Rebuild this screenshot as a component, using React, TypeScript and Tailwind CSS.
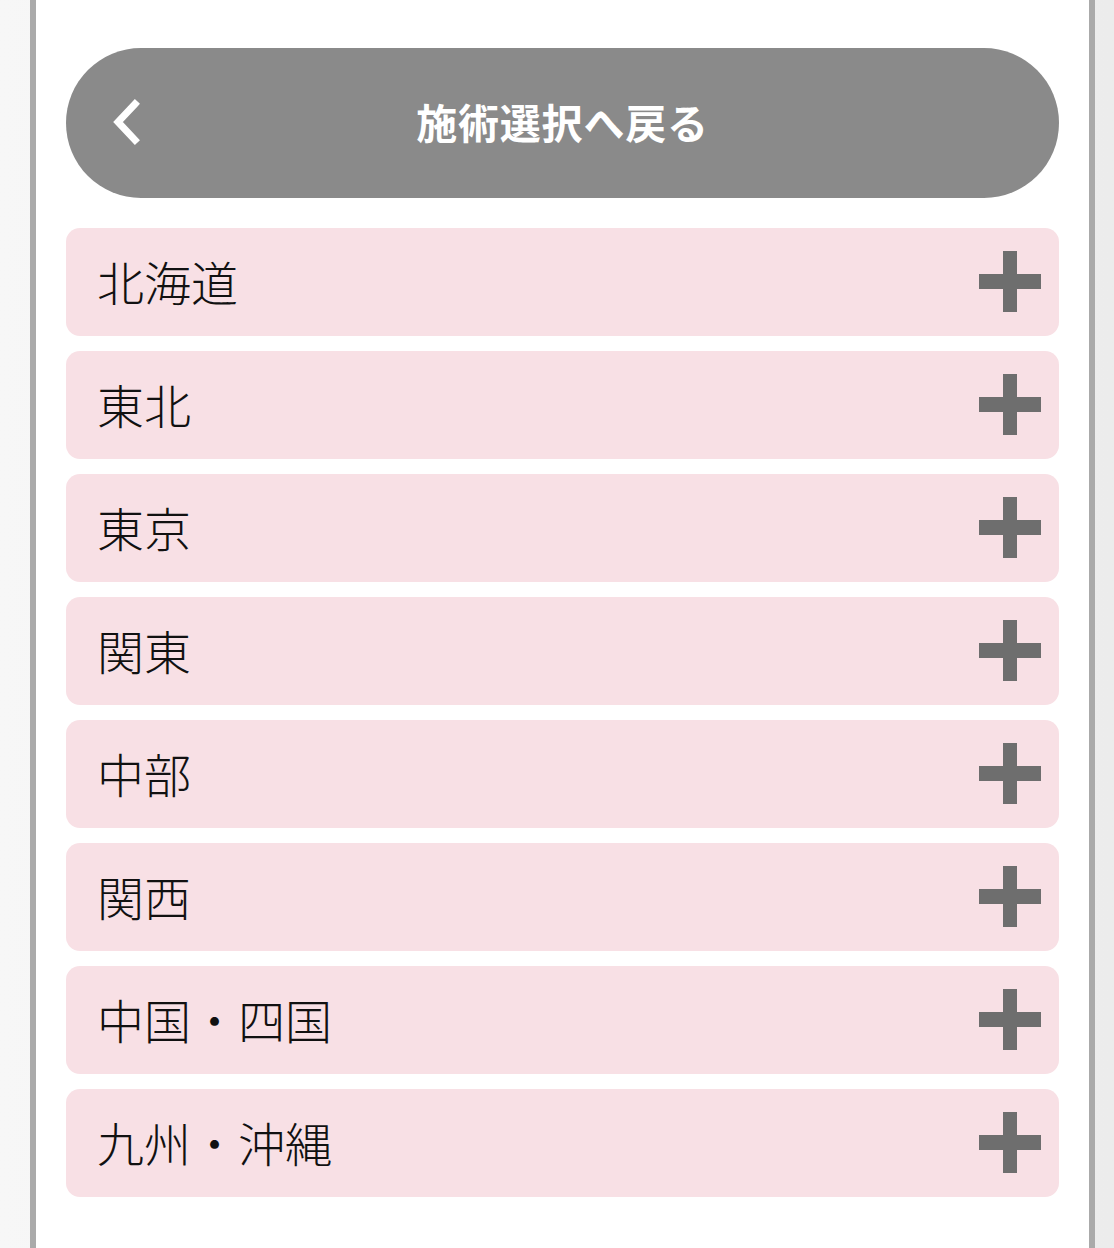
import React from 'react';

const regions = ["北海道", "東北", "東京", "関東", "中部", "関西", "中国・四国", "九州・沖縄"];

const PlusIcon = () => (
    <svg width="62" height="62" viewBox="0 0 62 62" className="shrink-0">
        <rect x="24" y="0" width="14" height="61" fill="#6e6e6e" />
        <rect x="0" y="23" width="62" height="15" fill="#6e6e6e" />
    </svg>
);

const BackButton = () => (
    <button className="relative w-full h-[150px] rounded-full bg-[#8a8a8a] flex items-center justify-center">
        <svg width="32" height="46" viewBox="0 0 32 46" className="absolute left-[44px] top-[51px]">
            <path d="M25 5 L8 23 L25 41" stroke="#ffffff" strokeWidth="7" fill="none" strokeLinecap="square" />
        </svg>
        <span className="text-white font-bold text-[41px] leading-none tracking-[0.8px] -mt-[4px]">施術選択へ戻る</span>
    </button>
);

const RegionRow = ({ name }: { name: string }) => (
    <div className="h-[108px] rounded-[14px] bg-[#f8e0e5] flex items-center justify-between pl-[31px] pr-[18px]">
        <span className="text-[47px] leading-none font-light text-[#111] -mt-[4px]">{name}</span>
        <PlusIcon />
    </div>
);

export default function App() {
    return (
        <div
            className="w-[1114px] h-[1248px] bg-gradient-to-r from-[#f7f7f7] to-[#ececec] overflow-hidden"
            style={{ fontFamily: '"Noto Sans CJK JP", "Noto Sans", sans-serif' }}
        >
            <div className="ml-[30px] w-[1065px] h-full bg-white border-x-[6px] border-[#aaaaaa] px-[30px] pt-[48px]">
                <BackButton />
                <div className="mt-[30px] flex flex-col gap-[15px]">
                    {regions.map((r) => (
                        <RegionRow key={r} name={r} />
                    ))}
                </div>
            </div>
        </div>
    );
}
